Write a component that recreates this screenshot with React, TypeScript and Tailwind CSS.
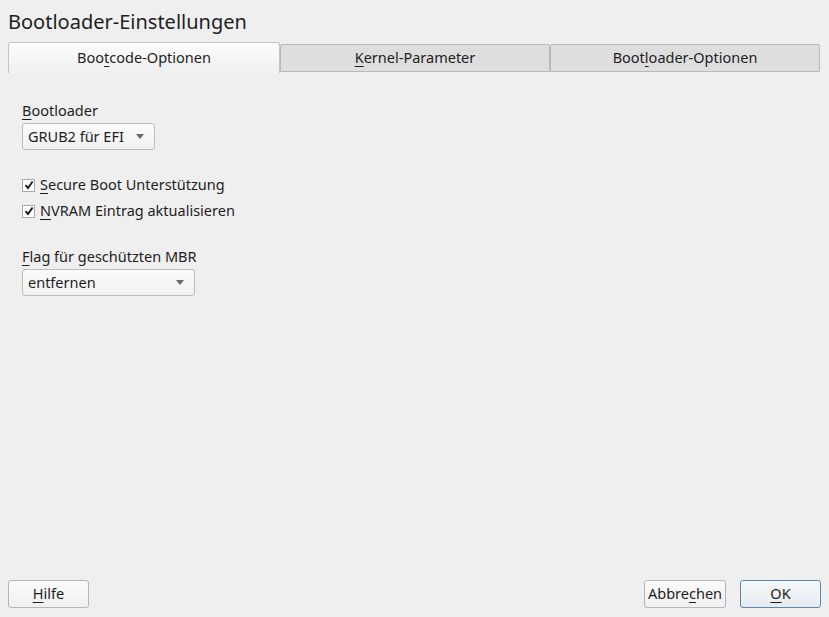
import { ReactNode } from 'react';

const FONT = "font-['Noto_Sans','DejaVu_Sans',sans-serif]";

function U({ children }: { children: ReactNode }) {
  return <span className="underline underline-offset-[3px] decoration-1">{children}</span>;
}

function Tab({ active, children }: { active?: boolean; children: ReactNode }) {
  if (active) {
    return (
      <div className="w-[272px] h-[31px] mt-0 flex items-center justify-center rounded-t-[3px] border border-b-0 border-[#c4c4c4] bg-gradient-to-b from-[#fcfcfc] to-[#efefef] text-[14.5px] text-[#1e1e1e]">
        {children}
      </div>
    );
  }
  return (
    <div className="flex-1 h-[28px] mt-[2px] flex items-center justify-center rounded-t-[2px] border border-[#b9b9b9] bg-[#dedede] text-[14.5px] text-[#1e1e1e]">
      {children}
    </div>
  );
}

function Combo({ width, value }: { width: string; value: string }) {
  return (
    <div
      className={`${width} h-[27px] flex items-center justify-between pl-[5px] pr-[10px] rounded-[3px] border border-[#bdbdbd] bg-gradient-to-b from-[#fbfbfb] to-[#f1f1f1] text-[14.5px] text-[#1e1e1e]`}
    >
      <span>{value}</span>
      <svg width="8" height="5" viewBox="0 0 8 5">
        <path d="M0 0h8L4 5z" fill="#6b6b6b" />
      </svg>
    </div>
  );
}

function Check({ children }: { children: ReactNode }) {
  return (
    <div className="flex items-center gap-[5px] h-[26px] text-[14.5px] text-[#1e1e1e]">
      <div className="w-[13px] h-[13px] border border-[#a8a8a8] bg-white flex items-center justify-center">
        <svg width="10" height="10" viewBox="0 0 10 10">
          <path d="M1.5 5.2L4 8L8.6 1.5" fill="none" stroke="#111" strokeWidth="1.8" />
        </svg>
      </div>
      <span>{children}</span>
    </div>
  );
}

function Button({ children, primary, width }: { children: ReactNode; primary?: boolean; width: string }) {
  return (
    <div
      className={`${width} h-[28px] flex items-center justify-center rounded-[3px] border text-[14.5px] text-[#1e1e1e] ${
        primary
          ? 'border-[#5f86ab] bg-gradient-to-b from-[#f6f8fa] to-[#e6ebf0]'
          : 'border-[#b5b5b5] bg-gradient-to-b from-[#fbfbfb] to-[#f0f0f0]'
      }`}
    >
      {children}
    </div>
  );
}

export default function App() {
  return (
    <div className={`${FONT} w-[829px] h-[617px] bg-[#efefef] flex flex-col`}>
      <div className="px-[8px] pt-[9px] h-[42px] text-[20px] leading-[26px] text-[#1e1e1e]">
        Bootloader-Einstellungen
      </div>

      <div className="flex items-start pl-[8px] pr-[9px] h-[31px]">
        <Tab active>
          Boo<U>t</U>code-Optionen
        </Tab>
        <Tab>
          <U>K</U>ernel-Parameter
        </Tab>
        <Tab>
          Boot<U>l</U>oader-Optionen
        </Tab>
      </div>

      <div className="flex-1 flex flex-col pl-[22px] pt-[27px]">
        <div className="text-[14.5px] leading-[20px] text-[#1e1e1e] mb-[3px]">
          <U>B</U>ootloader
        </div>
        <Combo width="w-[133px]" value="GRUB2 für EFI" />

        <div className="mt-[22px] flex flex-col">
          <Check>
            <U>S</U>ecure Boot Unterstützung
          </Check>
          <Check>
            <U>N</U>VRAM Eintrag aktualisieren
          </Check>
        </div>

        <div className="mt-[22px] text-[14.5px] leading-[20px] text-[#1e1e1e] mb-[3px]">
          <U>F</U>lag für geschützten MBR
        </div>
        <Combo width="w-[173px]" value="entfernen" />
      </div>

      <div className="flex items-center justify-between px-[8px] pb-[9px]">
        <Button width="w-[81px]">
          <U>H</U>ilfe
        </Button>
        <div className="flex gap-[14px]">
          <Button width="w-[82px]">
            Abbre<U>c</U>hen
          </Button>
          <Button width="w-[81px]" primary>
            <U>O</U>K
          </Button>
        </div>
      </div>
    </div>
  );
}
